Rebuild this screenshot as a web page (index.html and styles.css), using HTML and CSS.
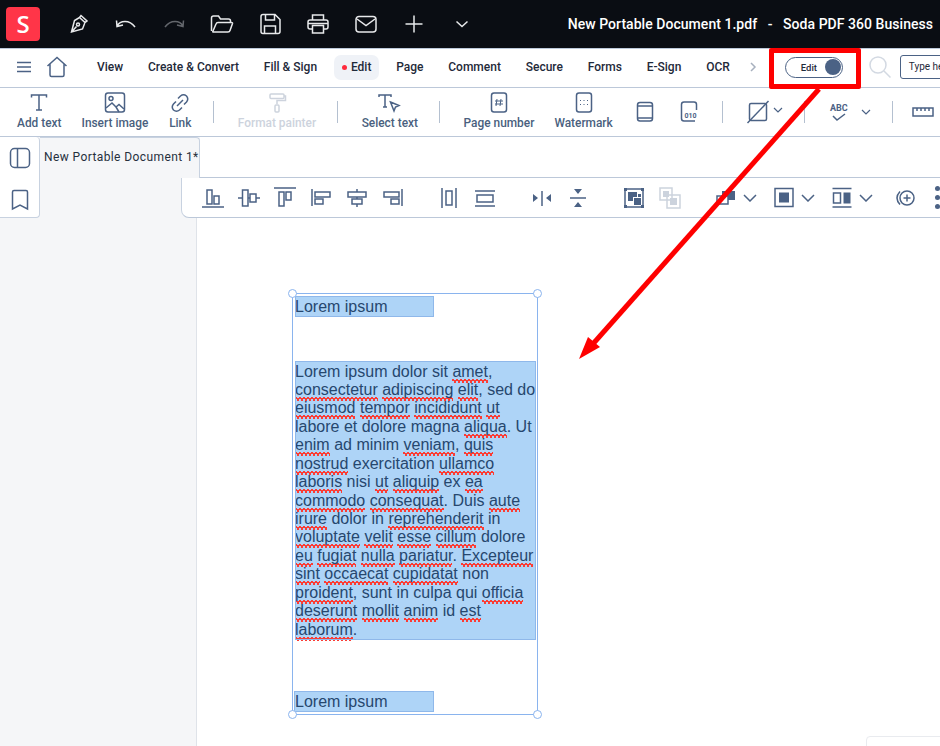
FILE: index.html
```html
<!DOCTYPE html>
<html lang="en">
<head>
  <meta charset="UTF-8">
  <title>Soda PDF 360 Business</title>
  <link rel="stylesheet" href="styles.css">
</head>
<body>
  <div class="app">
    <header class="title-bar">
      <div class="logo">S</div>
      <div class="quick-actions">
        <button class="quick-btn"><svg width="24" height="24" viewBox="0 0 24 24"><path d="M15 3.500l6 5.500-2 1.500-5.500-5zM13.500 5.500l5.500 5-2.500 6.500-11 3 3-11.500z M5.500 20l5-5.500"/><circle cx="12" cy="12.500" r="1.500"/></svg></button>
        <button class="quick-btn"><svg width="24" height="24" viewBox="0 0 24 24"><path d="M2.500 8.500l.5 6 6-1.500M3 14c3-5.500 12-7 18 1"/></svg></button>
        <button class="quick-btn is-off"><svg width="24" height="24" viewBox="0 0 24 24"><path d="M21.500 8.500l-.5 6-6-1.500M21 14c-3-5.500-12-7-18 1"/></svg></button>
        <button class="quick-btn"><svg width="24" height="24" viewBox="0 0 24 24"><path d="M1.500 19V6q0-2 2-2h5l2 3h8q2 0 2 2v1.500M3 20h15q1.500 0 2-1.500l2.500-7q.3-1-1-1H8q-1.500 0-2 1.500l-3 7q-.5 1 0 1z"/></svg></button>
        <button class="quick-btn"><svg width="24" height="24" viewBox="0 0 24 24"><path d="M3 4.500q0-2 2-2h12l5 5V19.500q0 2-2 2H5q-2 0-2-2zM7.500 2.500V8h9V2.500M6.500 21.500V14h11v7.500"/></svg></button>
        <button class="quick-btn"><svg width="24" height="24" viewBox="0 0 24 24"><path d="M6.500 8V3h11v5M6.500 17H4q-2 0-2-2v-5q0-2 2-2h16q2 0 2 2v5q0 2-2 2h-2.500M6.500 13.500h11V21h-11zM2 11.500h20"/></svg></button>
        <button class="quick-btn"><svg width="24" height="24" viewBox="0 0 24 24"><rect x="2" y="4.500" width="20" height="15.500" rx="3"/><path d="M3 7l9 6.500L21 7"/></svg></button>
        <button class="quick-btn"><svg width="24" height="24" viewBox="0 0 24 24"><path d="M12 3.500v17M3.500 12h17"/></svg></button>
        <button class="quick-btn"><svg width="24" height="24" viewBox="0 0 24 24"><path d="M6.500 9.500L12 14.500l5.500-5"/></svg></button>
      </div>
      <div class="doc-title">New Portable Document 1.pdf &nbsp; - &nbsp; Soda PDF 360 Business</div>
    </header>

    <nav class="menu-bar">
      <svg class="menu-icon" width="16" height="14" viewBox="0 0 16 14"><path d="M1 2.500h14M1 7h14M1 11.500h14"/></svg>
      <svg class="menu-icon home-icon" width="22" height="22" viewBox="0 0 22 22"><path d="M1.500 10L11 1.500 20.500 10M4 8v11q0 1.500 1.500 1.500h11q1.500 0 1.500-1.500V8"/></svg>
      <div class="menu-sep"></div>
      <div class="menu-items">
        <span class="menu-item">View</span>
        <span class="menu-item">Create &amp; Convert</span>
        <span class="menu-item">Fill &amp; Sign</span>
        <span class="menu-item is-active"><i class="red-dot"></i>Edit</span>
        <span class="menu-item">Page</span>
        <span class="menu-item">Comment</span>
        <span class="menu-item">Secure</span>
        <span class="menu-item">Forms</span>
        <span class="menu-item">E-Sign</span>
        <span class="menu-item">OCR</span>
      </div>
      <svg class="menu-more" width="8" height="10" viewBox="0 0 8 10"><path d="M2 1l4 4-4 4"/></svg>
      <div class="mode-toggle"><span>Edit</span><i class="knob"></i></div>
      <svg class="search-icon" width="24" height="24" viewBox="0 0 24 24"><circle cx="10" cy="10" r="8"/><path d="M16 16l6.500 6.500"/></svg>
      <div class="help-input">Type here to search</div>
    </nav>

    <section class="tool-bar">
      <div class="tool">
        <svg width="24" height="24" viewBox="0 0 24 24"><path d="M4.500 6.500V4h15v2.500M12 4v15M9 19h6"/></svg>
        <span>Add text</span>
      </div>
      <div class="tool">
        <svg width="24" height="24" viewBox="0 0 24 24"><rect x="2.500" y="2" width="19" height="19" rx="2.500"/><circle cx="8" cy="7.500" r="2"/><path d="M3 17l6-5 4 4 3-2.500 5 4.500M13 16l3 5"/></svg>
        <span>Insert image</span>
      </div>
      <div class="tool">
        <svg width="24" height="24" viewBox="0 0 24 24"><path d="M10 7.500l2.500-2.500q3-2.500 6 0 2.500 3 0 6L16 13.500M14 16.500L11.500 19q-3 2.500-6 0-2.500-3 0-6L8 10.500M9 15l6-6"/></svg>
        <span>Link</span>
      </div>
      <div class="tool-sep"></div>
      <div class="tool is-off">
        <svg width="24" height="24" viewBox="0 0 24 24"><rect x="5" y="3" width="14" height="4.500" rx="1"/><path d="M19 5h1.500v4.500H12V13"/><rect x="10" y="14" width="4" height="7" rx="1"/></svg>
        <span>Format painter</span>
      </div>
      <div class="tool-sep"></div>
      <div class="tool">
        <svg width="24" height="24" viewBox="0 0 24 24"><path d="M1 6V4h12v2M7 4v12M5 16h4M12.500 11l8.500 3.500-3.500 1.500-1.500 4z"/></svg>
        <span>Select text</span>
      </div>
      <div class="tool-sep"></div>
      <div class="tool">
        <svg width="24" height="24" viewBox="0 0 24 24"><rect x="4.500" y="2" width="15" height="19" rx="2.500"/><path d="M10 8l-1 7M14 8l-1 7M8 10h8M8 13h8" class="thin"/></svg>
        <span>Page number</span>
      </div>
      <div class="tool">
        <svg width="24" height="24" viewBox="0 0 24 24"><rect x="4.500" y="2" width="15" height="19" rx="2.500"/><path d="M8 9.500h1M11.500 9.500h1M15 9.500h1M8 13.500h1M11.500 13.500h1M15 13.500h1" class="thin"/></svg>
        <span>Watermark</span>
      </div>
      <div class="tool-icon">
        <svg width="24" height="24" viewBox="0 0 24 24"><rect x="4.500" y="2.500" width="15" height="18.500" rx="2.500"/><path d="M4.500 6h15M4.500 18h15"/></svg>
      </div>
      <div class="tool-icon">
        <svg width="24" height="24" viewBox="0 0 24 24"><path d="M18 21h-11q-2.500 0-2.500-2.500v-14q0-2.500 2.500-2.500h10q2.500 0 2.500 2.500V10"/><text x="7.500" y="17.500" class="mini-num">010</text></svg>
      </div>
      <div class="tool-sep"></div>
      <div class="tool-drop no-fill">
        <svg width="24" height="24" viewBox="0 0 24 24"><rect x="3.500" y="3.500" width="17" height="17" rx="1.500"/><path d="M1.500 23L22.500 1"/></svg>
        <svg class="chev" width="10" height="6" viewBox="0 0 10 6"><path d="M1 1l4 4 4-4"/></svg>
      </div>
      <div class="tool-sep"></div>
      <div class="tool-drop spell">
        <div class="abc"><b>ABC</b><svg width="14" height="8" viewBox="0 0 14 8"><path d="M1 3l4 4 8-6"/></svg></div>
        <svg class="chev" width="10" height="6" viewBox="0 0 10 6"><path d="M1 1l4 4 4-4"/></svg>
      </div>
      <div class="tool-sep"></div>
      <div class="tool-icon ruler">
        <svg width="24" height="24" viewBox="0 0 24 24"><rect x="2" y="8" width="20" height="8"/><path d="M6 8v3M10 8v3M14 8v3M18 8v3"/></svg>
      </div>
    </section>

    <main class="workspace">
      <aside class="rail">
        <svg width="22" height="22" viewBox="0 0 22 22"><rect x="1.500" y="1.500" width="19" height="19" rx="4"/><path d="M8.500 1.500v19"/></svg>
        <svg width="22" height="22" viewBox="0 0 22 22"><path d="M3.500 3q0-1.500 1.500-1.500h12q1.500 0 1.500 1.500V20l-7.500-4-7.500 4z"/></svg>
      </aside>
      <div class="doc-tab">New Portable Document 1*</div>
      <div class="tab-rest"></div>

      <div class="edit-bar">
        <div class="edit-group">
          <svg width="24" height="24" viewBox="0 0 24 24"><path d="M1 21h22M6 4h5v14H6zM13 10h5v8h-5z"/></svg>
          <svg width="24" height="24" viewBox="0 0 24 24"><path d="M1 12h4.500M11 12h2M19 12h4M5.500 4H11v16H5.500zM13 8h6v8h-6z"/></svg>
          <svg width="24" height="24" viewBox="0 0 24 24"><path d="M1 2h22M6 6h5v14H6zM13 6h5v8h-5z"/></svg>
          <svg width="24" height="24" viewBox="0 0 24 24"><path d="M3 3v17M6 6h15v5H6zM6 13h8v5H6z"/></svg>
          <svg width="24" height="24" viewBox="0 0 24 24"><path d="M12 3v3M12 11v2M12 18v3M3 6h18v5H3zM7 13h10v5H7z"/></svg>
          <svg width="24" height="24" viewBox="0 0 24 24"><path d="M21 3v17M3 6h15v5H3zM10 13h8v5h-8z"/></svg>
        </div>
        <div class="edit-group">
          <svg width="24" height="24" viewBox="0 0 24 24"><path d="M5 2v20M19 2v20M9 5h6v14H9z"/></svg>
          <svg width="24" height="24" viewBox="0 0 24 24"><path d="M2 5h20M2 20h20M4 9h16v7H4z"/></svg>
        </div>
        <div class="edit-group flips">
          <svg width="24" height="24" viewBox="0 0 24 24"><path d="M12 5v15"/><path class="solid" d="M3 8l5 4-5 4zM21 8l-5 4 5 4z"/></svg>
          <svg width="24" height="24" viewBox="0 0 24 24"><path d="M4 12h16"/><path class="solid" d="M8 3l4 5 4-5zM8 21l4-5 4 5z"/></svg>
        </div>
        <div class="edit-group">
          <svg width="24" height="24" viewBox="0 0 24 24"><path d="M3 3h18v18H3z"/><path class="solid" d="M2 2h3v3H2zM19 2h3v3h-3zM2 19h3v3H2zM19 19h3v3h-3zM6 6h9v5h-4v4H6z"/><path class="solid" d="M12 12h7v7h-7zM16 8h3v3h-3z"/></svg>
          <svg class="is-off" width="24" height="24" viewBox="0 0 24 24"><path d="M2 2h12v12H2zM9 9h13v13H9z"/><path class="solid" d="M5 5h6v6H5zM12 12h7v7h-7z"/></svg>
        </div>
        <div class="edit-group drops">
          <div class="edit-drop">
            <svg width="24" height="24" viewBox="0 0 24 24"><path d="M3 10h11v8H3z"/><path class="solid" d="M8 5h13v9H14v-4H8z"/></svg>
            <svg class="chev-big" width="14" height="8" viewBox="0 0 14 8"><path d="M1 1l6 6 6-6"/></svg>
          </div>
          <div class="edit-drop">
            <svg width="24" height="24" viewBox="0 0 24 24"><path d="M3 2.500h18v18H3z"/><path class="solid" d="M7 6.500h10v10H7z"/></svg>
            <svg class="chev-big" width="14" height="8" viewBox="0 0 14 8"><path d="M1 1l6 6 6-6"/></svg>
          </div>
          <div class="edit-drop">
            <svg width="24" height="24" viewBox="0 0 24 24"><path d="M2.500 2.500h19M2.500 21h19M3.500 7h7v10h-7z"/><path class="solid" d="M13.500 6.500h7v11h-7z"/></svg>
            <svg class="chev-big" width="14" height="8" viewBox="0 0 14 8"><path d="M1 1l6 6 6-6"/></svg>
          </div>
        </div>
        <svg class="add-obj" width="24" height="24" viewBox="0 0 24 24"><circle cx="14" cy="12" r="7"/><path d="M14 8.500v7M10.500 12h7M7 5.500q-6 6.500 0 13"/></svg>
        <div class="more-dots"><i></i><i></i><i></i></div>
      </div>

      <div class="page">
        <div class="selection">
          <i class="handle tl"></i><i class="handle tr"></i><i class="handle bl"></i><i class="handle br"></i>
          <div class="sel-block head-block">Lorem ipsum</div>
          <div class="sel-block body-block">
            Lorem ipsum dolor sit <u>amet</u>,<br>
            <u>consectetur</u> <u>adipiscing</u> <u>elit</u>, sed do<br>
            <u>eiusmod</u> <u>tempor</u> <u>incididunt</u> <u>ut</u><br>
            labore et dolore magna <u>aliqua</u>. Ut<br>
            <u>enim</u> ad minim <u>veniam</u>, <u>quis</u><br>
            <u>nostrud</u> exercitation <u>ullamco</u><br>
            <u>laboris</u> nisi <u>ut</u> <u>aliquip</u> ex <u>ea</u><br>
            <u>commodo</u> <u>consequat</u>. Duis <u>aute</u><br>
            <u>irure</u> dolor in <u>reprehenderit</u> in<br>
            <u>voluptate</u> <u>velit</u> <u>esse</u> <u>cillum</u> dolore<br>
            <u>eu</u> <u>fugiat</u> <u>nulla</u> <u>pariatur</u>. <u>Excepteur</u><br>
            <u>sint</u> <u>occaecat</u> <u>cupidatat</u> non<br>
            <u>proident</u>, sunt in culpa qui <u>officia</u><br>
            <u>deserunt</u> <u>mollit</u> <u>anim</u> id <u>est</u><br>
            <u>laborum</u>.
          </div>
          <div class="sel-block foot-block">Lorem ipsum</div>
        </div>
        <div class="corner-card"></div>
      </div>
    </main>
  </div>

  <div class="callout-box"></div>
  <svg class="callout-arrow" width="940" height="746" viewBox="0 0 940 746">
    <path class="arrow-line" d="M819 89L592 345"/>
    <path class="arrow-head" d="M579 359L588 337L600 347z"/>
  </svg>
</body>
</html>
```

FILE: styles.css
```css
* {
  box-sizing: border-box;
}

html, body {
  margin: 0;
  width: 940px;
  height: 746px;
  overflow: hidden;
  background: #fff;
  font-family: Roboto, "Liberation Sans", sans-serif;
}

svg {
  display: block;
  flex: none;
  fill: none;
  stroke: #4b6285;
  stroke-width: 1.5;
}

svg .solid {
  fill: #4b6285;
  stroke: none;
}

.app {
  display: flex;
  flex-direction: column;
  height: 746px;
}

/* title bar */
.title-bar {
  display: flex;
  align-items: center;
  flex: none;
  height: 48px;
  padding: 0 7px 0 6px;
  background: #0a0d13;
  color: #fff;
}

.logo {
  width: 34px;
  height: 34px;
  border-radius: 4px;
  background: #ff3548;
  color: #fff;
  font-family: "Open Sans", sans-serif;
  font-size: 24px;
  font-weight: 600;
  line-height: 34px;
  text-align: center;
}

.quick-actions {
  display: flex;
  margin-left: 14px;
}

.quick-btn {
  display: flex;
  justify-content: center;
  align-items: center;
  width: 48px;
  height: 48px;
  padding: 0;
  border: none;
  background: none;
}

.quick-btn svg {
  stroke: #e8e9eb;
}

.quick-btn.is-off svg {
  stroke: #63666c;
}

.doc-title {
  margin-left: auto;
  font-size: 14px;
  font-weight: 500;
  letter-spacing: 0.04px;
  white-space: nowrap;
}

/* menu row */
.menu-bar {
  display: flex;
  align-items: center;
  flex: none;
  height: 40px;
  padding: 0 0 2px 16px;
  border-top: 1px solid #bcc8d9;
  border-bottom: 1px solid #bcc8d9;
  overflow: hidden;
}

.home-icon {
  margin-left: 14px;
}

.menu-sep {
  width: 1px;
  height: 22px;
  margin: 0 3px 0 18px;
  background: #a9b6c9;
}

.menu-items {
  display: flex;
  align-items: center;
  gap: 8.8px;
}

.menu-item {
  display: flex;
  align-items: center;
  height: 25px;
  padding: 0 8px;
  border-radius: 7px;
  color: #1f2a3a;
  font-size: 12px;
  font-weight: 500;
  white-space: nowrap;
}

.menu-item.is-active {
  background: #eff2f7;
}

.red-dot {
  width: 5px;
  height: 5px;
  margin-right: 4px;
  border-radius: 50%;
  background: #ff2b3d;
}

.menu-more {
  margin-left: 11px;
  stroke: #a7b0be;
}

.mode-toggle {
  display: flex;
  justify-content: space-between;
  align-items: center;
  flex: none;
  width: 58px;
  height: 21px;
  margin-left: 28px;
  padding: 0 1px 0 15px;
  border: 1px solid #4b6285;
  border-radius: 11px;
  color: #1f2a3a;
  font-size: 9.5px;
  font-weight: 500;
}

.knob {
  width: 16px;
  height: 16px;
  border-radius: 50%;
  background: #4b6285;
}

.search-icon {
  margin-left: 25px;
  stroke: #d3d9e2;
  stroke-width: 1.5;
}

.help-input {
  flex: none;
  width: 90px;
  height: 24px;
  margin-left: 8px;
  padding-left: 8px;
  border: 1px solid #4b6285;
  border-radius: 3px;
  color: #1f2a3a;
  font-size: 10px;
  line-height: 22px;
  white-space: nowrap;
  overflow: hidden;
}

/* tool row */
.tool-bar {
  display: flex;
  align-items: center;
  gap: 20px;
  flex: none;
  height: 49px;
  padding-left: 17px;
  border-bottom: 1px solid #bcc8d9;
  overflow: hidden;
}

.tool {
  display: flex;
  flex-direction: column;
  align-items: center;
  gap: 1px;
  padding-bottom: 3px;
  color: #4a5f7e;
  font-size: 11.9px;
  font-weight: 500;
  line-height: 14px;
  white-space: nowrap;
}

.tool.is-off {
  color: #cdd3dd;
}

.tool.is-off svg {
  stroke: #cdd3dd;
}

.tool .thin {
  stroke-width: 1;
}

.tool-sep {
  flex: none;
  width: 1px;
  height: 22px;
  margin: 0 3.5px 0 1px;
  background: #b4c0d0;
}

.tool-icon {
  flex: none;
  width: 24px;
}

.tool-icon.ruler {
  margin-left: -5px;
}

.mini-num {
  fill: #4b6285;
  stroke: none;
  font-size: 7px;
  font-weight: 700;
}

.tool-drop {
  display: flex;
  align-items: center;
  flex: none;
}

.tool-drop .chev {
  stroke-width: 1.2;
}

.no-fill .chev {
  margin: -4px 0 0 3px;
}

.spell .chev {
  margin-left: 12px;
}

.abc {
  display: flex;
  flex-direction: column;
  align-items: center;
  width: 20px;
  color: #4b6285;
  font-size: 9px;
  line-height: 10px;
}

/* workspace */
.workspace {
  display: grid;
  grid-template-columns: 40px 141px 15px 4px 1fr;
  grid-template-rows: 41px 40px 1fr;
  flex: 1;
  min-height: 0;
  background: #f5f6f8;
}

.rail {
  display: flex;
  flex-direction: column;
  align-items: center;
  gap: 20px;
  grid-column: 1;
  grid-row: 1 / 3;
  padding-top: 10px;
  background: #fff;
  border: 1px solid #c8d2e0;
  border-left: none;
  border-top-width: 0;
  border-radius: 0 4px 4px 0;
}

.doc-tab {
  grid-column: 2 / 5;
  grid-row: 1;
  padding: 12px 0 0 4px;
  border-top: 1px solid #c8d2e0;
  border-right: 1px solid #c8d2e0;
  border-top-right-radius: 4px;
  color: #26303d;
  font-size: 12px;
  letter-spacing: 0.4px;
  white-space: nowrap;
}

.tab-rest {
  grid-column: 5;
  grid-row: 1;
  background: #fff;
  border-bottom: 1px solid #bcc8d9;
}

.edit-bar {
  display: flex;
  align-items: center;
  grid-column: 3 / 6;
  grid-row: 2;
  padding-left: 19px;
  background: #fff;
  border-left: 1px solid #c8d2e0;
  border-bottom: 1px solid #bcc8d9;
  border-bottom-left-radius: 8px;
  overflow: hidden;
}

.edit-group {
  display: flex;
  gap: 12px;
  margin-right: 32px;
}

.edit-group.flips {
  margin-left: 1px;
}

.edit-group svg.is-off {
  stroke: #ccd3dd;
}

.edit-group svg.is-off .solid {
  fill: #ccd3dd;
}

.edit-group.drops {
  gap: 15px;
  margin: 0;
}

.edit-drop {
  display: flex;
  align-items: center;
  gap: 5px;
}

.add-obj {
  margin-left: 20px;
}

.more-dots {
  display: flex;
  flex-direction: column;
  gap: 4px;
  margin-left: 18px;
}

.more-dots i {
  width: 5px;
  height: 5px;
  border-radius: 50%;
  background: #4b6285;
}

.page {
  position: relative;
  grid-column: 4 / 6;
  grid-row: 3;
  background: #fff;
  border-left: 1px solid #dfe3e9;
}

/* the selected text object sits on the free page canvas */
.selection {
  position: absolute;
  left: 95px;
  top: 75px;
  display: flex;
  flex-direction: column;
  width: 246px;
  height: 422px;
  padding: 2px 0 0 2px;
  border: 1px solid #8ab4ee;
}

.handle {
  position: absolute;
  width: 9px;
  height: 9px;
  border: 1px solid #8ab4ee;
  border-radius: 50%;
  background: #fff;
}

.handle.tl { left: -5px; top: -5px; }
.handle.tr { right: -5px; top: -5px; }
.handle.bl { left: -5px; bottom: -5px; }
.handle.br { right: -5px; bottom: -5px; }

.sel-block {
  padding-top: 1.5px;
  background: #aed4f7;
  outline: 1px solid #8fb8ea;
  outline-offset: -1px;
  color: #26476e;
  font-family: "Liberation Sans", Arial, sans-serif;
  font-size: 16px;
  line-height: 18.43px;
  white-space: nowrap;
}

/* spell check squiggle, finer than text-decoration wavy gets */
.sel-block u {
  padding-bottom: 3px;
  text-decoration: none;
  background-image:
    linear-gradient(45deg, transparent 40%, #fb3c34 40%, #fb3c34 70%, transparent 70%),
    linear-gradient(-45deg, transparent 40%, #fb3c34 40%, #fb3c34 70%, transparent 70%);
  background-repeat: repeat-x;
  background-size: 4px 4px;
  background-position: 0 100%, 2px 100%;
}

.head-block {
  width: 139px;
  height: 21px;
}

.body-block {
  width: 241px;
  height: 279px;
  margin-top: 44px;
}

.foot-block {
  width: 140px;
  height: 21px;
  margin: 51px 0 0 -1px;
  padding-left: 1px;
}

.corner-card {
  position: absolute;
  left: 669px;
  top: 518px;
  width: 80px;
  height: 20px;
  border: 1px solid #e9ebef;
  border-radius: 4px;
}

/* red annotation over the screenshot */
.callout-box {
  position: absolute;
  left: 769px;
  top: 48px;
  width: 92px;
  height: 41px;
  border: 5px solid #fe0000;
  border-radius: 2px;
}

.callout-arrow {
  position: absolute;
  left: 0;
  top: 0;
  pointer-events: none;
}

.arrow-line {
  stroke: #fe0000;
  stroke-width: 5;
}

.arrow-head {
  fill: #fe0000;
  stroke: none;
}
```
